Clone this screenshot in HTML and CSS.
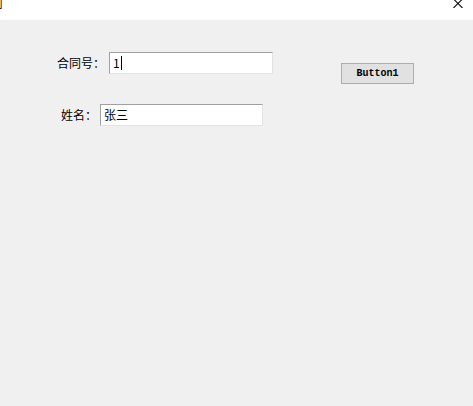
FILE: index.html
```html
<!DOCTYPE html>
<html lang="zh">
<head>
<meta charset="utf-8">
<title>Form1</title>
<link rel="stylesheet" href="styles.css">
</head>
<body>
<div class="window">
  <div class="titlebar">
    <svg class="app-icon" width="4" height="10" viewBox="0 0 4 10">
      <rect x="0" y="8" width="3" height="1" fill="#222"/>
      <rect x="1" y="0" width="1" height="8" fill="#f0b050"/>
      <rect x="2" y="0" width="1" height="9" fill="#3a7bd5"/>
    </svg>
    <svg class="close" width="10" height="9" viewBox="0 0 10 9">
      <path d="M0.5 0 L9.5 9 M9.5 0 L0.5 9" stroke="#111" stroke-width="1.1" fill="none"/>
    </svg>
  </div>
  <div class="form">
    <div class="row row-1">
      <span class="label label-1">合同号：</span>
      <div class="textbox tb-1"><span class="value">1</span><span class="caret"></span></div>
      <div class="button">Button1</div>
    </div>
    <div class="row row-2">
      <span class="label label-2">姓名：</span>
      <div class="textbox tb-2"><span class="value">张三</span></div>
    </div>
  </div>
</div>
</body>
</html>
```
FILE: styles.css
```css
html, body {
  margin: 0;
  padding: 0;
  background: #f0f0f0;
}
.window {
  width: 473px;
  height: 406px;
  background: #f0f0f0;
  font-family: "Noto Sans CJK SC", "Noto Sans", sans-serif;
  font-size: 12px;
  color: #000;
}
.titlebar {
  height: 20px;
  background: #ffffff;
  display: flex;
  justify-content: space-between;
  align-items: flex-start;
}
.app-icon {
  display: block;
  margin-left: -1px;
}
.close {
  display: block;
  margin-right: 10px;
  margin-top: -1px;
}
.form {
  padding-top: 32px;
}
.row {
  display: flex;
  align-items: flex-start;
}
.row-1 {
  padding-left: 57px;
}
.row-2 {
  padding-left: 61px;
  margin-top: 20px;
}
.label {
  line-height: 22px;
  height: 22px;
  white-space: nowrap;
}
.label-1 { width: 52px; }
.label-2 { width: 39px; }
.textbox {
  box-sizing: border-box;
  height: 22px;
  background: #fff;
  border-top: 1px solid #a0a0a0;
  border-left: 1px solid #a0a0a0;
  border-right: 1px solid #e3e3e3;
  border-bottom: 1px solid #e3e3e3;
  padding-left: 3px;
  display: flex;
  align-items: center;
  line-height: 20px;
}
.tb-1 { width: 164px; }
.tb-2 { width: 163px; }
.caret {
  width: 1px;
  height: 14px;
  background: #000;
  margin-left: 1px;
}
.button {
  box-sizing: border-box;
  width: 73px;
  height: 21px;
  margin-left: 68px;
  margin-top: 11px;
  background: #e1e1e1;
  border: 1px solid #adadad;
  font-family: "Liberation Mono", monospace;
  font-weight: bold;
  font-size: 10px;
  display: flex;
  align-items: center;
  justify-content: center;
}
```
